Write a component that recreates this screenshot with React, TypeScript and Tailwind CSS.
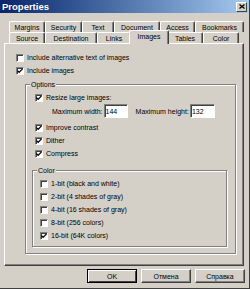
import type { ReactNode } from "react";

function Check({ on }: { on?: boolean }) {
  return (
    <div className="flex h-[8px] w-[8px] shrink-0 items-center justify-center border border-t-[#808080] border-l-[#808080] border-r-white border-b-white bg-white shadow-[inset_1px_1px_#404040]">
      {on && (
        <svg width="6" height="6" viewBox="0 0 7 7">
          <path d="M0.5 3 L2.5 5 L6.5 1" fill="none" stroke="#000" strokeWidth="1.4" />
        </svg>
      )}
    </div>
  );
}

function Row({ on, children }: { on?: boolean; children: ReactNode }) {
  return (
    <div className="flex h-[13px] items-center gap-[3px]">
      <Check on={on} />
      <span>{children}</span>
    </div>
  );
}

function Tab({ w, label, active }: { w: string; label: string; active?: boolean }) {
  if (active) {
    return (
      <div
        className={`${w} relative z-10 -mx-[2px] -mt-[2px] mb-[-1px] flex h-[14px] items-start justify-center rounded-t-[2px] border-l border-t border-r border-l-white border-t-white border-r-[#404040] bg-[#d4d0c8] pt-[1px] shadow-[inset_-1px_0_#808080]`}
      >
        {label}
      </div>
    );
  }
  return (
    <div
      className={`${w} flex h-[11px] items-center justify-center rounded-t-[2px] border-l border-t border-r border-l-white border-t-white border-r-[#404040] bg-[#d4d0c8] shadow-[inset_-1px_0_#808080]`}
    >
      {label}
    </div>
  );
}

function Group({ label, className, children }: { label: string; className: string; children: ReactNode }) {
  return (
    <div className={`relative border border-[#808080] shadow-[inset_1px_1px_#fff,1px_1px_#fff] ${className}`}>
      <span className="absolute -top-[5px] left-[4px] bg-[#d4d0c8] px-[1px] leading-[9px]">{label}</span>
      {children}
    </div>
  );
}

function Btn({ label, def }: { label: string; def?: boolean }) {
  return (
    <div
      className={`flex h-[14px] w-[50px] items-center justify-center border ${
        def ? "border-black shadow-[inset_1px_1px_#fff,inset_-1px_-1px_#404040]" : "border-t-white border-l-white border-r-[#404040] border-b-[#404040] shadow-[inset_-1px_-1px_#808080]"
      } bg-[#d4d0c8]`}
    >
      {label}
    </div>
  );
}

export default function App() {
  return (
    <div className="relative h-[289px] w-[250px] overflow-hidden border-r border-b border-r-[#404040] border-b-[#404040] bg-[#d4d0c8] font-['Liberation_Sans',Arial,sans-serif] text-[7px] leading-[9px] text-black">
      <div className="flex h-[13px] items-center justify-between bg-gradient-to-r from-[#0a246a] to-[#a6caf0] pl-[2px] pr-[2px]">
        <span className="text-[9.5px] font-bold text-white">Properties</span>
        <div className="flex h-[10px] w-[11px] items-center justify-center border border-t-white border-l-white border-r-[#404040] border-b-[#404040] bg-[#d4d0c8]">
          <svg width="6" height="5" viewBox="0 0 6 5">
            <path d="M0.5 0.5 L5.5 4.5 M5.5 0.5 L0.5 4.5" stroke="#000" strokeWidth="1.3" />
          </svg>
        </div>
      </div>

      <div className="mt-[8px] flex pl-[9px]">
        <Tab w="w-[36px]" label="Margins" />
        <Tab w="w-[37px]" label="Security" />
        <Tab w="w-[32px]" label="Text" />
        <Tab w="w-[46px]" label="Document" />
        <Tab w="w-[35px]" label="Access" />
        <Tab w="w-[49px]" label="Bookmarks" />
      </div>
      <div className="flex items-start pl-[9px]">
        <Tab w="w-[36px]" label="Source" />
        <Tab w="w-[52px]" label="Destination" />
        <Tab w="w-[34px]" label="Links" />
        <Tab w="w-[40px]" label="Images" active />
        <Tab w="w-[36px]" label="Tables" />
        <Tab w="w-[36px]" label="Color" />
      </div>

      <div className="mx-[4px] h-[223px] w-[240px] border border-t-white border-l-white border-r-[#404040] border-b-[#404040] pl-[11px] pt-[7px] shadow-[inset_-1px_-1px_#808080]">
        <Row>Include alternative text of images</Row>
        <Row on>Include images</Row>

        <Group label="Options" className="ml-[9px] mt-[7px] h-[170px] w-[211px] pl-[9px] pt-[6px]">
          <Row on>Resize large images:</Row>
          <div className="flex h-[14px] items-center pl-[17px]">
            <span className="mr-[1px]">Maximum width:</span>
            <div className="flex h-[14px] w-[24px] items-center border border-t-[#808080] border-l-[#808080] border-r-white border-b-white bg-white pl-[1px] shadow-[inset_1px_1px_#404040]">
              144
            </div>
            <span className="ml-[8px] mr-[1px]">Maximum height:</span>
            <div className="flex h-[14px] w-[25px] items-center border border-t-[#808080] border-l-[#808080] border-r-white border-b-white bg-white pl-[1px] shadow-[inset_1px_1px_#404040]">
              132
            </div>
          </div>
          <div className="mt-[3px]">
            <Row on>Improve contrast</Row>
            <Row on>Dither</Row>
            <Row on>Compress</Row>
          </div>

          <Group label="Color" className="-ml-[3px] mt-[10px] h-[77px] w-[195px] pl-[7px] pt-[6px]">
            <Row>1-bit (black and white)</Row>
            <Row>2-bit (4 shades of gray)</Row>
            <Row>4-bit (16 shades of gray)</Row>
            <Row>8-bit (256 colors)</Row>
            <Row on>16-bit (64K colors)</Row>
          </Group>
        </Group>
      </div>

      <div className="mt-[3px] flex justify-end gap-[4px] pr-[4px]">
        <Btn label="OK" def />
        <Btn label="Отмена" />
        <Btn label="Справка" />
      </div>
    </div>
  );
}
